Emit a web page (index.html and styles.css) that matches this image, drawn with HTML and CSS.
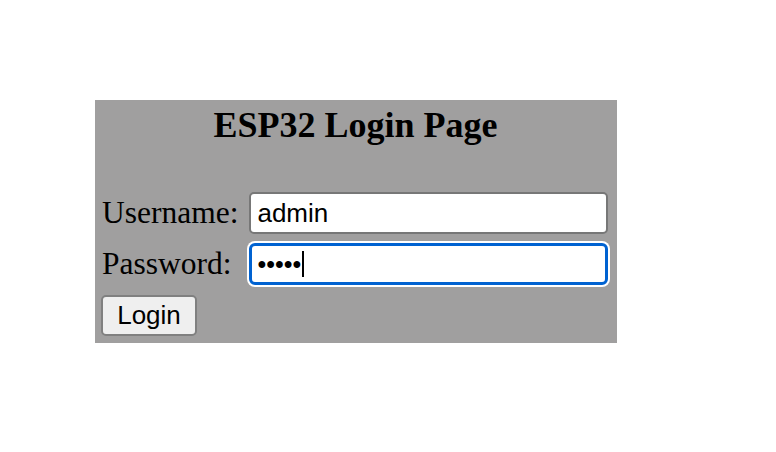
FILE: index.html
```html
<!DOCTYPE html>
<html>
<head>
<meta charset="utf-8">
<link rel="stylesheet" href="styles.css">
</head>
<body>
<form class="login" name="loginForm">
  <h1 class="title">ESP32 Login Page</h1>
  <div class="rows">
    <label class="label" for="userid">Username:</label>
    <input class="field" id="userid" type="text" value="admin">
    <label class="label">Password:</label>
    <div class="field focused" role="textbox"><span class="dots">•••••</span><span class="caret"></span></div>
    <button class="btn" type="button">Login</button>
  </div>
</form>
</body>
</html>
```
FILE: styles.css
```css
html, body { margin: 0; padding: 0; background: #fff; }
body { padding: 100px 0 0 95px; font-family: "Liberation Serif", "Times New Roman", serif; }
.login {
  width: 522px;
  height: 243px;
  box-sizing: border-box;
  background: #a09f9f;
  padding: 5px 9px 0 6px;
}
.title {
  margin: 0;
  font-size: 36px;
  line-height: 40px;
  font-weight: bold;
  text-align: center;
  color: #000;
  padding-left: 2px;
}
.rows {
  margin-top: 47px;
  display: grid;
  grid-template-columns: auto 1fr;
  column-gap: 11px;
  row-gap: 9px;
  align-items: center;
}
.label {
  font-size: 31.5px;
  color: #000;
  padding-left: 1px;
}
.field {
  box-sizing: border-box;
  height: 42px;
  width: 100%;
  border: 2px solid #777;
  border-radius: 5px;
  background: #fff;
  padding: 0 6px;
  font-family: "Liberation Sans", Arial, sans-serif;
  font-size: 26px;
  color: #000;
  outline: none;
  margin: 0;
}
.field.focused {
  display: flex;
  align-items: center;
  border: 3px solid #0062d1;
  border-radius: 6px;
  box-shadow: 0 0 0 2px #fff;
  padding: 0 5px;
}
.dots { font-size: 25px; }
.caret {
  width: 2px;
  height: 26px;
  background: #000;
  margin-left: 1px;
}
.btn {
  grid-column: 1;
  justify-self: start;
  width: 96px;
  height: 41px;
  margin-top: 1px;
  box-sizing: border-box;
  border: 2px solid #808080;
  border-radius: 5px;
  background: #efefef;
  font-family: "Liberation Sans", Arial, sans-serif;
  font-size: 26px;
  color: #000;
  padding: 0;
}
```
